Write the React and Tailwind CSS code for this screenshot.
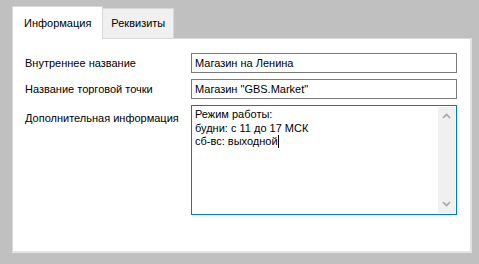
import React from 'react';

const font = { fontFamily: '"Liberation Sans", Arial, sans-serif' };

function Chevron({ up }) {
    return (
        <svg width="9" height="6" viewBox="0 0 9 6" className="block">
            <path d={up ? 'M1 5 L4.5 1.5 L8 5' : 'M1 1 L4.5 4.5 L8 1'} fill="none" stroke="#a6a6a6" strokeWidth="1.6" />
        </svg>
    );
}

export default function App() {
    return (
        <div className="w-[479px] h-[264px] bg-[#c0c0c0] pt-[6px] pl-[12px] text-[11px] text-black whitespace-nowrap" style={font}>
            <div className="flex items-end h-[32px]">
                <div className="relative z-10 h-[33px] -mb-px bg-white border border-b-0 border-[#d9d9d9] px-[11px] flex items-center">
                    Информация
                </div>
                <div className="h-[30px] bg-[#f0f0f0] border border-l-0 border-b-0 border-[#d9d9d9] px-[8px] flex items-center">
                    Реквизиты
                </div>
            </div>
            <div className="w-[460px] h-[215px] bg-white border border-[#d9d9d9] border-r-2 border-b-2 border-r-[#e3e3e3] border-b-[#e3e3e3] pl-[12px] pt-[14px]">
                <div className="grid grid-cols-[166px_266px] gap-y-[6px]">
                    <div className="flex items-center">Внутреннее название</div>
                    <div className="h-[20px] border border-[#7a7a7a] px-[3px] flex items-center">Магазин на Ленина</div>
                    <div className="flex items-center">Название торговой точки</div>
                    <div className="h-[20px] border border-[#7a7a7a] px-[3px] flex items-center">Магазин "GBS.Market"</div>
                    <div className="pt-[5px]">Дополнительная информация</div>
                    <div className="h-[110px] border border-[#0078d7] flex">
                        <div className="flex-1 pl-[3px] pt-[2px] leading-[13.5px]">
                            <div>Режим работы:</div>
                            <div>будни: с 11 до 17 МСК</div>
                            <div className="flex items-center">сб-вс: выходной<span className="inline-block w-px h-[13px] bg-black"></span></div>
                        </div>
                        <div className="w-[17px] my-px mr-px bg-[#f0f0f0] flex flex-col items-center justify-between py-[6px]">
                            <Chevron up />
                            <Chevron />
                        </div>
                    </div>
                </div>
            </div>
        </div>
    );
}
